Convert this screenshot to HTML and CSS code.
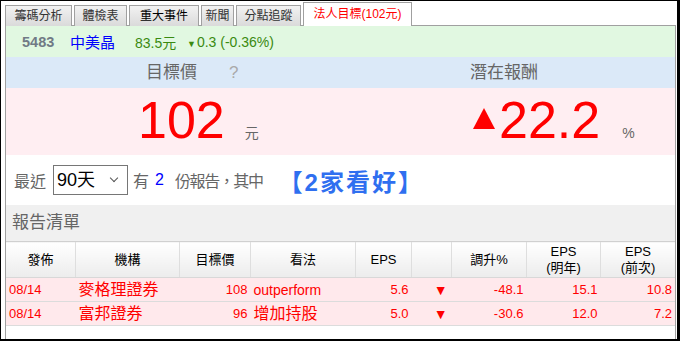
FILE: index.html
```html
<!DOCTYPE html>
<html lang="zh-Hant">
<head>
  <meta charset="UTF-8">
  <title>法人目標</title>
  <link rel="stylesheet" href="styles.css">
</head>
<body>
  <div class="frame">

    <!-- 分頁 -->
    <div class="tabs">
      <div class="tab t1">籌碼分析</div>
      <div class="tab t2">體檢表</div>
      <div class="tab t3 dark">重大事件</div>
      <div class="tab t4">新聞</div>
      <div class="tab t5">分點追蹤</div>
      <div class="tab t6 active">法人目標(102元)</div>
    </div>

    <div class="panel">
      <div class="quote">
        <span class="code">5483</span>
        <span class="name">中美晶</span>
        <span class="price">83.5元</span>
        <span class="chg"><small>▼</small>0.3 (-0.36%)</span>
      </div>

      <div class="summary head">
        <div class="left">目標價<span class="help">?</span></div>
        <div class="right">潛在報酬</div>
      </div>
      <div class="summary body">
        <div class="left"><span class="big">102</span><span class="unit">元</span></div>
        <div class="right">
          <svg class="up" width="22" height="21" viewBox="0 0 22 21"><polygon points="11,0 22,21 0,21" fill="#ff0000"/></svg>
          <span class="big">22.2</span><span class="unit">%</span>
        </div>
      </div>

      <div class="filter">
        <span>最近</span>
        <span class="select-wrap">
          <select class="days"><option>90天</option><option>30天</option><option>180天</option></select>
        </span>
        <span class="has">有</span>
        <span class="count">2</span>
        <span class="rest">份報告，其中</span>
        <span class="bull">【2家看好】</span>
      </div>

      <div class="list-title">報告清單</div>

      <table class="reports">
        <thead>
          <tr>
            <th class="c1">發佈</th>
            <th class="c2">機構</th>
            <th class="c3">目標價</th>
            <th class="c4">看法</th>
            <th class="c5">EPS</th>
            <th class="c6"></th>
            <th class="c7">調升%</th>
            <th class="c8">EPS<br>(明年)</th>
            <th class="c9">EPS<br>(前次)</th>
          </tr>
        </thead>
        <tbody>
          <tr>
            <td>08/14</td>
            <td class="org">麥格理證券</td>
            <td class="num">108</td>
            <td class="view">outperform</td>
            <td class="num">5.6</td>
            <td class="arrow">▼</td>
            <td class="num">-48.1</td>
            <td class="num">15.1</td>
            <td class="num">10.8</td>
          </tr>
          <tr>
            <td>08/14</td>
            <td class="org">富邦證券</td>
            <td class="num">96</td>
            <td class="view cjk">增加持股</td>
            <td class="num">5.0</td>
            <td class="arrow">▼</td>
            <td class="num">-30.6</td>
            <td class="num">12.0</td>
            <td class="num">7.2</td>
          </tr>
        </tbody>
      </table>
    </div>

  </div>
</body>
</html>
```

FILE: styles.css
```css
html, body {
  margin: 0;
  padding: 0;
  background: #fff;
}
body {
  font-family: "Liberation Sans", "Noto Sans CJK TC", sans-serif;
  color: #333;
}
.frame {
  box-sizing: border-box;
  width: 680px;
  height: 341px;
  border: 1px solid #000;
  border-right-width: 3px;
  border-bottom-width: 2px;
  padding: 1px 1px 0 4px;
  overflow: hidden;
}

/* TABS */
.tabs {
  display: flex;
  align-items: flex-end;
  gap: 2px;
  height: 24px;
  position: relative;
  z-index: 1;
}
.tab {
  box-sizing: border-box;
  height: 21px;
  line-height: 21px;
  text-align: center;
  font-size: 12px;
  color: #333;
  background: linear-gradient(#f2f2f2, #dadada);
  border: 1px solid #a0a0a0;
  border-bottom: none;
  white-space: nowrap;
}
.t1 { width: 67px; }
.t2 { width: 53px; }
.t3 { width: 70px; }
.t4 { width: 33px; }
.t5 { width: 65px; }
.t6 { width: 109px; }
.tab.dark { color: #000; }
.tab.active {
  height: 24px;
  line-height: 22px;
  background: #fff;
  color: #ff0000;
}

/* PANEL */
.panel {
  border: 1px solid #a0a0a0;
  border-bottom: none;
  margin-top: -1px;
  height: 320px;
}
.quote {
  height: 31px;
  background: #e1f8e1;
  display: flex;
  align-items: center;
  font-size: 14px;
  padding-left: 16px;
}
.quote .code { color: #707a85; font-weight: bold; width: 48px; font-size: 14.5px; }
.quote .name { color: #0000ff; width: 65px; font-size: 15px; }
.quote .price { color: #3a8a10; width: 52px; }
.quote .chg { color: #3a8a10; }
.quote .chg small { font-size: 9px; margin-right: 1px; }

.summary {
  display: grid;
  grid-template-columns: 335px 334px;
}
.summary.head {
  height: 31px;
  background: #dbe9f8;
  font-size: 17px;
  color: #666;
  line-height: 31px;
}
.summary.head .left { padding-left: 140px; }
.summary.head .right { padding-left: 129px; }
.help {
  color: #aaa;
  margin-left: 32px;
}
.summary.body {
  height: 67px;
  background: #ffeef2;
}
.summary.body .left,
.summary.body .right {
  display: flex;
  align-items: baseline;
  padding-top: 5px;
}
.summary.body .left { padding-left: 132px; }
.summary.body .right { padding-left: 132px; }
.big {
  font-size: 52px;
  color: #ff0000;
  line-height: 54px;
}
.unit {
  font-size: 14px;
  color: #666;
  margin-left: 20px;
}
.summary.body .right .unit { margin-left: 22px; }
.up {
  align-self: flex-start;
  margin-top: 15px;
  margin-right: 4px;
}

/* FILTER */
.filter {
  height: 50px;
  display: flex;
  align-items: center;
  padding-left: 8px;
  font-size: 16px;
  color: #666;
}
.select-wrap {
  position: relative;
  margin-left: 7px;
  height: 30px;
}
.select-wrap::after {
  content: "";
  position: absolute;
  right: 11px;
  top: 10px;
  width: 5px;
  height: 5px;
  border-right: 1px solid #555;
  border-bottom: 1px solid #555;
  transform: rotate(45deg);
  pointer-events: none;
}
.days {
  appearance: none;
  -webkit-appearance: none;
  box-sizing: border-box;
  width: 75px;
  height: 30px;
  font-size: 18px;
  font-family: "Liberation Sans", "Noto Sans CJK TC", sans-serif;
  color: #000;
  border: 1px solid #767676;
  border-radius: 0;
  background: #fff;
  padding: 0 3px;
  margin: 0;
}
.has { margin-left: 5px; }
.count { color: #0000ff; margin-left: 6px; }
.rest { margin-left: 11px; letter-spacing: -1.4px; }
.bull {
  color: #2f6ff0;
  font-size: 24px;
  font-weight: bold;
  letter-spacing: 2px;
  margin-left: 16px;
}

.list-title {
  height: 36px;
  line-height: 36px;
  background: #f0f0f0;
  font-size: 17px;
  color: #666;
  padding-left: 6px;
}

/* TABLE */
.reports {
  border-collapse: collapse;
  table-layout: fixed;
  width: 669px;
  font-size: 13px;
}
.reports th {
  height: 35px;
  padding: 0;
  font-weight: normal;
  color: #000;
  line-height: 16px;
  background: linear-gradient(#ffffff, #ececec);
  border-top: 1px solid #d0d0d0;
  border-left: 1px solid #dedede;
  border-bottom: 1px solid #d8d8d8;
}
.reports th.c1 { border-left: none; width: 69px; }
.c2 { width: 103px; }
.c3 { width: 70px; }
.c4 { width: 104px; }
.c5 { width: 55px; }
.c6 { width: 39px; }
.c7 { width: 74px; }
.c8 { width: 73px; }
.reports td {
  height: 23px;
  padding: 0 3px;
  color: #ff0000;
  background: #ffe9ec;
  border-bottom: 1px solid #dcdcdc;
  white-space: nowrap;
  line-height: 20px;
}
.reports td.org { font-size: 16px; }
.reports td.view { font-size: 14px; }
.reports td.view.cjk { font-size: 16px; }
.reports td.num { text-align: right; }
.reports td.arrow {
  text-align: right;
  padding-right: 4px;
  font-size: 14px;
}
```
